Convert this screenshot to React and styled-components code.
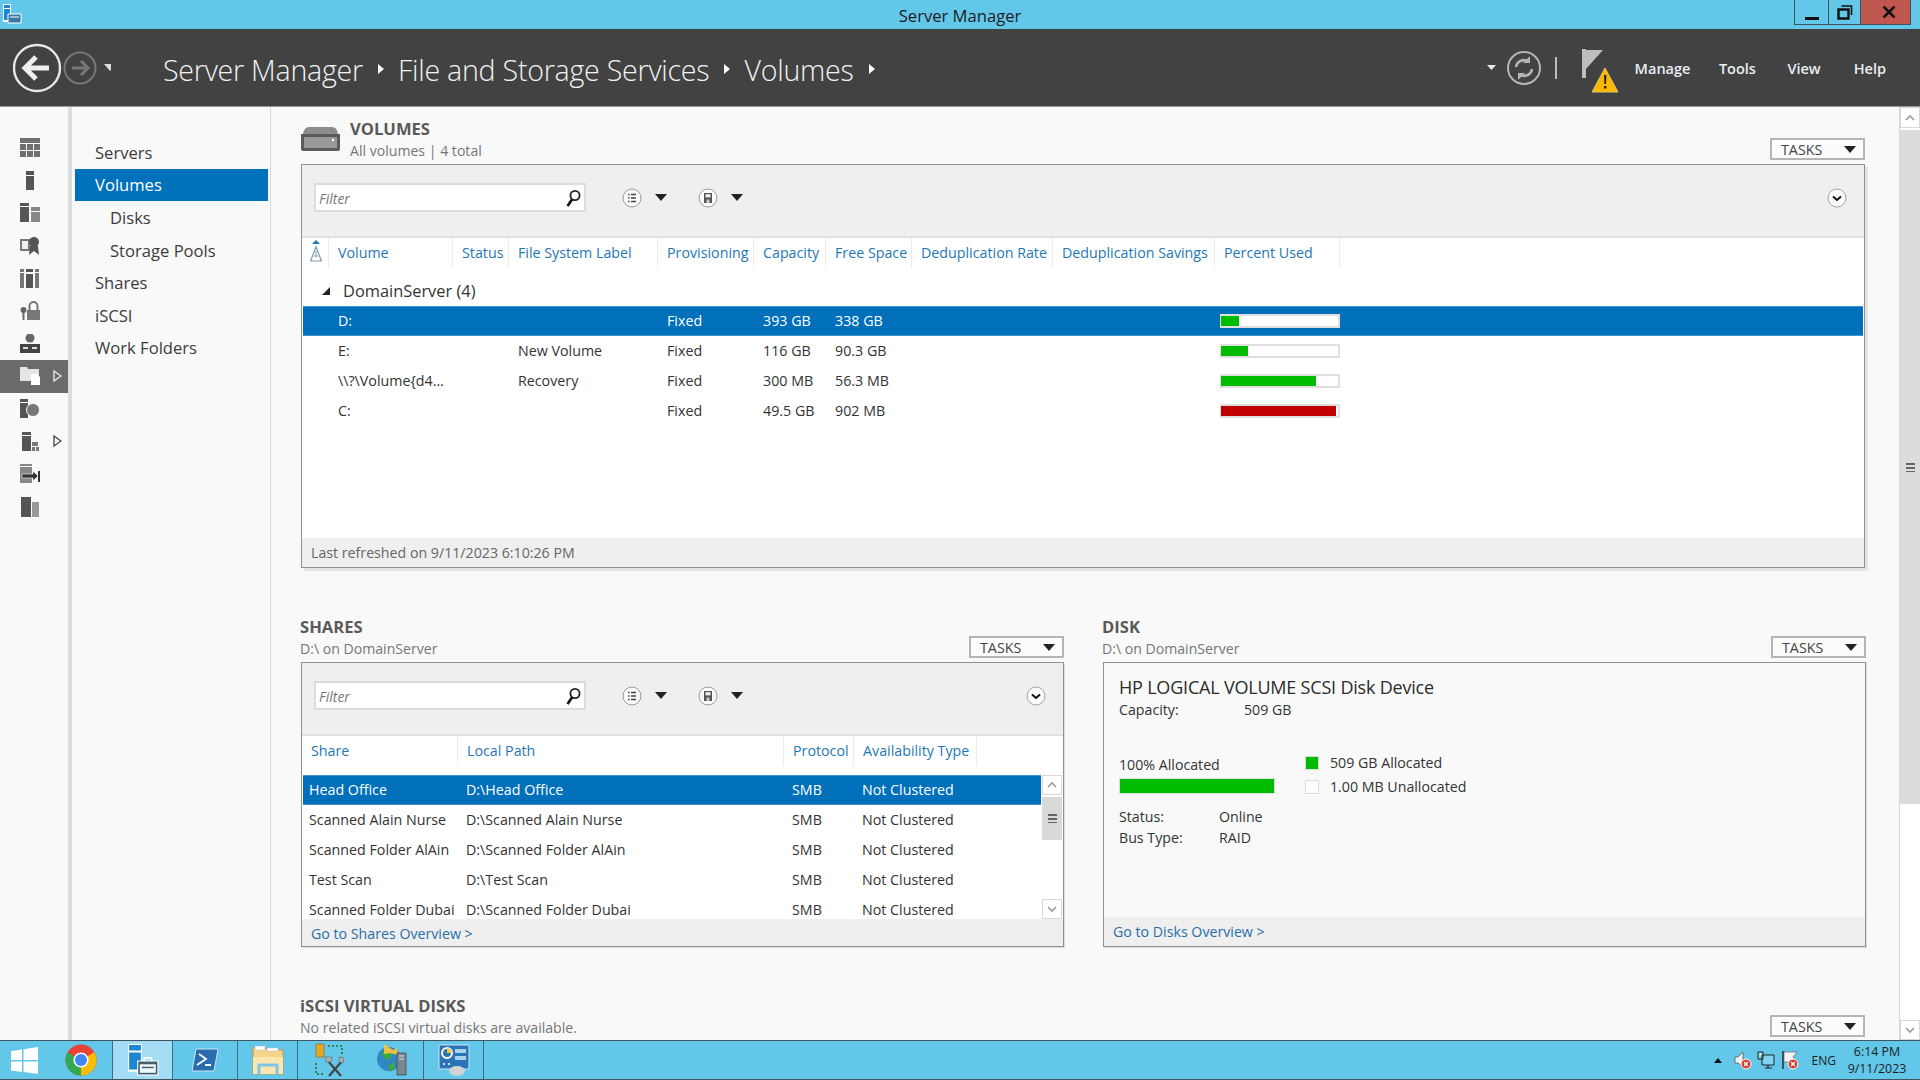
import React from "react";
import styled, { createGlobalStyle } from "styled-components";

const GlobalStyle = createGlobalStyle`
  html, body { margin: 0; padding: 0; height: 100%; background: #f9f9f9; }
  body { font-family: "Open Sans", "Noto Sans", sans-serif; overflow: hidden; }
  * { box-sizing: border-box; }
`;

const Window = styled.div`
  width: 1920px;
  height: 1080px;
  display: flex;
  flex-direction: column;
  overflow: hidden;
`;

const TitleBar = styled.div`
  height: 29px;
  flex: none;
  background: #63c7ea;
  display: grid;
  grid-template-columns: 1fr auto 1fr;
  align-items: start;
  color: #1c1c1c;
`;
const TitleIcon = styled.div`
  padding: 4px 0 0 2px;
  height: 25px;
`;
const TitleText = styled.div`
  font-size: 16.6px;
  line-height: 31px;
`;
const WindowButtons = styled.div`
  justify-self: end;
  display: flex;
  height: 25px;
  margin-right: 9px;
  border: 1px solid #3b5560;
  border-top: 0;
`;
const WindowButton = styled.div`
  width: ${(p) => p.$w}px;
  display: flex;
  align-items: center;
  justify-content: center;
  padding-left: ${(p) => (p.$close ? 7 : 0)}px;
  background: ${(p) => (p.$close ? "#c0574f" : "transparent")};
  & + & { border-left: 1px solid #3b5560; }
`;

const Header = styled.div`
  height: 78px;
  flex: none;
  background: #424242;
  border-bottom: 1px solid #9a9a9a;
  display: flex;
  align-items: center;
  color: #fff;
`;
const NavButtons = styled.div`
  display: flex;
  align-items: center;
  margin-left: 13px;
  width: 150px;
`;
const Crumbs = styled.div`
  display: flex;
  align-items: center;
  padding-top: 3px;
  font-size: 28.6px;
  font-weight: 300;
  color: #f2f2f2;
  letter-spacing: -0.25px;
`;
const CrumbArrow = styled.span`
  width: 0;
  height: 0;
  margin: 0 14px 0 15px;
  border-left: 6px solid #fff;
  border-top: 5px solid transparent;
  border-bottom: 5px solid transparent;
`;
const HeaderRight = styled.div`
  margin-left: auto;
  display: flex;
  align-items: center;
  padding-right: 34px;
  height: 100%;
`;
const Divider = styled.div`
  width: 2px;
  height: 22px;
  background: #bdbdbd;
  margin: 0 25px 0 10px;
`;
const FlagWrap = styled.div`
  display: flex;
  margin-top: 9px;
`;
const MenuItem = styled.div`
  font-size: 14.5px;
  font-weight: 600;
  color: #e8eef4;
  padding-top: 2px;
  margin-left: ${(p) => p.$ml}px;
`;

const Body = styled.div`
  flex: 1;
  min-height: 0;
  display: flex;
`;
const Rail = styled.div`
  width: 72px;
  flex: none;
  padding-top: 25px;
  background: #f9f9f9;
  border-right: 4px solid #dcdcdc;
`;
const RailItem = styled.div`
  height: 32.6px;
  position: relative;
  display: flex;
  align-items: center;
  padding-left: 20px;
  background: ${(p) => (p.$active ? "#6b6b6b" : "transparent")};
`;
const RailArrow = styled.svg`
  position: absolute;
  left: 53px;
  top: 10px;
`;
const SideNav = styled.div`
  width: 199px;
  flex: none;
  padding: 29px 2px 0 3px;
  background: #f9f9f9;
  border-right: 1px solid #d8d8d8;
`;
const NavItem = styled.div`
  height: 32.6px;
  display: flex;
  align-items: center;
  font-size: 16.6px;
  padding-left: ${(p) => (p.$sub ? 35 : 20)}px;
  color: ${(p) => (p.$active ? "#fff" : "#3c3c3c")};
  background: ${(p) => (p.$active ? "#0072bc" : "transparent")};
`;

const Content = styled.div`
  flex: 1;
  min-width: 0;
  padding: 11px 34px 0 30px;
  overflow: hidden;
  background: #f9f9f9;
`;
const SectionHead = styled.div`
  height: 42px;
  margin-bottom: 4px;
  display: flex;
  justify-content: space-between;
  align-items: flex-end;
`;
const HeadLeft = styled.div`
  display: flex;
  align-items: center;
  gap: 9px;
  align-self: stretch;
  margin-left: -1px;
`;
const HeadText = styled.div`
  margin: 0 0 -2px -1px;
`;
const VolumesText = styled.div`
  margin-top: 1px;
`;
const HeadTitle = styled.div`
  font-size: 16.6px;
  font-weight: 700;
  line-height: 22px;
  color: #5a5a5a;
`;
const HeadSub = styled.div`
  font-size: 14.1px;
  line-height: 22px;
  color: #767676;
`;
const TasksButton = styled.div`
  width: 95px;
  height: 22px;
  border: 2px solid #b5b5b5;
  background: #fcfcfc;
  display: flex;
  align-items: center;
  justify-content: space-between;
  padding: 0 7px 0 9px;
  font-size: 14.3px;
  color: #444;
`;
const ArrowDown = styled.span`
  width: 0;
  height: 0;
  flex: none;
  border-top: 7px solid #222;
  border-left: 6px solid transparent;
  border-right: 6px solid transparent;
`;
const Panel = styled.div`
  height: ${(p) => p.$h}px;
  margin-bottom: 48px;
  background: ${(p) => p.$bg || "#fff"};
  border: 1px solid #909090;
  box-shadow: ${(p) => (p.$shadow ? "3px 3px 0 #e4e4e4" : "1px 1px 0 #ddd")};
  display: flex;
  flex-direction: column;
  overflow: hidden;
`;
const Toolbar = styled.div`
  height: 73px;
  flex: none;
  background: #efefef;
  border-bottom: 2px solid #e2e2e2;
  display: flex;
  align-items: flex-start;
  padding: 18px 17px 0 12px;
`;
const FilterBox = styled.div`
  width: 272px;
  height: 29px;
  background: #fff;
  border: 2px solid #dcdcdc;
  display: flex;
  align-items: center;
  justify-content: space-between;
  padding: 1px 3px 0 3px;
  font-size: 14px;
  font-style: italic;
  color: #777;
  margin-right: 36px;
`;
const ToolGroup = styled.div`
  display: flex;
  align-items: center;
  gap: 13px;
  margin-right: 31px;
  height: 29px;
`;
const Collapse = styled.div`
  margin-left: auto;
  height: 29px;
  display: flex;
  align-items: center;
`;
const Columns = styled.div`
  display: grid;
  grid-template-columns: ${(p) => p.$cols};
  height: ${(p) => p.$h}px;
  flex: none;
  background: #fff;
`;
const ColHead = styled.div`
  padding: 5px 0 0 9px;
  height: 30px;
  font-size: 14.25px;
  line-height: 20px;
  white-space: nowrap;
  color: #1f78b4;
  border-right: 1px solid #ececec;
`;
const SortCell = styled.div`
  height: 30px;
  padding: 2px 0 0 7px;
  border-right: 1px solid #ececec;
`;
const GroupRow = styled.div`
  height: 38px;
  flex: none;
  display: flex;
  align-items: center;
  gap: 13px;
  padding: 7px 0 0 20px;
  font-size: 16.4px;
  color: #333;
`;
const GroupArrow = styled.span`
  width: 0;
  height: 0;
  border-bottom: 8px solid #222;
  border-left: 8px solid transparent;
`;
const DataRow = styled.div`
  display: grid;
  grid-template-columns: ${(p) => p.$cols};
  height: 30px;
  flex: none;
  margin: 0 1px;
  padding-bottom: 1px;
  align-items: center;
  font-size: 14.25px;
  white-space: nowrap;
  color: ${(p) => (p.$selected ? "#fff" : "#333")};
  background: ${(p) => (p.$selected ? "#0070bb" : "transparent")};
  box-shadow: ${(p) => (p.$selected ? "inset 0 1px 0 #3d96d0, inset 0 -1px 0 #3d96d0" : "none")};
`;
const Cell = styled.div`
  padding-left: ${(p) => p.$pl ?? 8}px;
  overflow: hidden;
`;
const Meter = styled.div`
  width: 120px;
  height: 14px;
  margin-left: 4px;
  background: #fff;
  border: 2px solid #dfdfdf;
  border-left-width: 1px;
`;
const MeterFill = styled.div`
  height: 100%;
  background: ${(p) => p.$color};
`;
const Spacer = styled.div`
  flex: 1;
  background: #fff;
`;
const PanelFooter = styled.div`
  height: 29px;
  flex: none;
  background: #efefef;
  display: flex;
  align-items: center;
  padding-left: ${(p) => p.$pl || 9}px;
  font-size: 14.2px;
  color: ${(p) => p.$color || "#2a6ea8"};
`;
const TwoCols = styled.div`
  display: grid;
  grid-template-columns: 763px 763px;
  column-gap: 39px;
`;
const RowsWrap = styled.div`
  height: 144px;
  flex: none;
  display: flex;
  background: #fff;
`;
const RowsClip = styled.div`
  flex: 1;
  min-width: 0;
  overflow: hidden;
`;
const MiniScroll = styled.div`
  width: 21px;
  flex: none;
  display: flex;
  flex-direction: column;
  align-items: stretch;
  padding-right: 1px;
`;
const ScrollBtn = styled.div`
  height: ${(p) => p.$h}px;
  flex: none;
  background: #fff;
  border: 1px solid #d8d8d8;
  display: flex;
  align-items: center;
  justify-content: center;
`;
const MiniThumb = styled.div`
  height: 43px;
  margin-top: 2px;
  background: #d9d9d9;
  display: flex;
  align-items: center;
  justify-content: center;
  flex: none;
`;
const ScrollGap = styled.div`
  flex: 1;
`;
const Grip = styled.div`
  width: 9px;
  height: 9px;
  background: repeating-linear-gradient(#666 0 2px, transparent 2px 4px);
`;
const DiskBody = styled.div`
  flex: 1;
  padding: 13px 15px 0;
  font-size: 14.2px;
  color: #333;
`;
const DiskTitle = styled.div`
  font-size: 18px;
  line-height: 22px;
  color: #2b2b2b;
  letter-spacing: -0.2px;
`;
const InfoRow = styled.div`
  display: grid;
  grid-template-columns: ${(p) => p.$label}px 1fr;
  line-height: 21.5px;
`;
const DiskCapacity = styled(InfoRow)`
  margin-top: 1px;
`;
const Allocation = styled.div`
  display: flex;
  gap: 30px;
  margin: 33px 0 9px;
`;
const AllocLeft = styled.div`
  width: 156px;
  line-height: 20px;
  padding-top: 1px;
`;
const AllocBar = styled.div`
  height: 16px;
  margin-top: 3px;
  background: #00bb00;
  border: 1px solid #dcdcdc;
`;
const Legend = styled.div`
  display: flex;
  flex-direction: column;
  gap: 4px;
  margin-top: -1px;
`;
const LegendRow = styled.div`
  display: flex;
  align-items: center;
  gap: 11px;
  line-height: 20px;
`;
const Swatch = styled.span`
  width: 14px;
  height: 14px;
  background: ${(p) => p.$color};
  border: 1px solid #dcdcdc;
`;
const PageScroll = styled.div`
  width: 21px;
  flex: none;
  display: flex;
  flex-direction: column;
  background: #fff;
  border-left: 1px solid #d8d8d8;
`;
const PageThumb = styled.div`
  height: 674px;
  flex: none;
  margin-top: 2px;
  background: #dcdcdc;
  display: flex;
  align-items: center;
  justify-content: center;
`;

const Taskbar = styled.div`
  height: 40px;
  flex: none;
  background: #63c7ea;
  border-top: 1px solid #3f5560;
  border-bottom: 1px solid #3f5560;
  display: flex;
  align-items: stretch;
`;
const TaskItem = styled.div`
  width: ${(p) => p.$w}px;
  display: flex;
  align-items: center;
  justify-content: center;
  padding-right: ${(p) => p.$pr || 0}px;
  background: ${(p) => (p.$active ? "#a3dcf3" : "transparent")};
  border-right: ${(p) => (p.$edge ? "1px solid #3c6d80" : "0")};
`;
const Tray = styled.div`
  margin-left: auto;
  display: flex;
  align-items: center;
  color: #1c1c1c;
`;
const TrayUp = styled.span`
  width: 0;
  height: 0;
  margin-right: 12px;
  border-bottom: 5px solid #111;
  border-left: 4px solid transparent;
  border-right: 4px solid transparent;
`;
const TrayIcon = styled.span`
  display: flex;
  margin-right: ${(p) => p.$mr}px;
`;
const TrayLang = styled.div`
  font-size: 12px;
  margin: 0 5px 0 12px;
`;
const Clock = styled.div`
  font-size: 12.4px;
  line-height: 17px;
  text-align: center;
  width: 72px;
  margin-right: 7px;
`;

const volumeCols = "27px 124px 56px 149px 96px 72px 86px 141px 162px 125px 1fr";
const shareCols = "156px 326px 70px 123px 1fr";

const volumeRows = [
  { name: "D:", label: "", prov: "Fixed", cap: "393 GB", free: "338 GB", pct: 15, color: "#00bb00", selected: true },
  { name: "E:", label: "New Volume", prov: "Fixed", cap: "116 GB", free: "90.3 GB", pct: 23, color: "#00bb00" },
  { name: "\\\\?\\Volume{d4...", label: "Recovery", prov: "Fixed", cap: "300 MB", free: "56.3 MB", pct: 81, color: "#00bb00" },
  { name: "C:", label: "", prov: "Fixed", cap: "49.5 GB", free: "902 MB", pct: 98, color: "#c00000" },
];

const shareRows = [
  ["Head Office", "D:\\Head Office"],
  ["Scanned Alain Nurse", "D:\\Scanned Alain Nurse"],
  ["Scanned Folder AlAin", "D:\\Scanned Folder AlAin"],
  ["Test Scan", "D:\\Test Scan"],
  ["Scanned Folder Dubai", "D:\\Scanned Folder Dubai"],
];

const ListCircle = () => (
  <svg width="20" height="20" viewBox="0 0 20 20">
    <circle cx="10" cy="10" r="9" fill="#fafafa" stroke="#9a9a9a" />
    <path d="M6 6.5h1.5M6 10h1.5M6 13.5h1.5M9 6.5h5M9 10h5M9 13.5h5" stroke="#444" strokeWidth="1.6" />
  </svg>
);
const SaveCircle = () => (
  <svg width="20" height="20" viewBox="0 0 20 20">
    <circle cx="10" cy="10" r="9" fill="#fafafa" stroke="#9a9a9a" />
    <path d="M6 5h8v10H6z" fill="#555" />
    <path d="M7.5 6.2h5v3.2h-5z" fill="#f2f2f2" />
    <path d="M8.5 11.5h3V15h-3z" fill="#c8c8c8" />
  </svg>
);
const ChevronCircle = () => (
  <svg width="20" height="20" viewBox="0 0 20 20">
    <circle cx="10" cy="10" r="9" fill="#fafafa" stroke="#a5a5a5" />
    <path d="M6 8.5l4 3.5 4-3.5" fill="none" stroke="#111" strokeWidth="2" />
  </svg>
);
const SearchIcon = () => (
  <svg width="16" height="19" viewBox="0 0 16 19">
    <circle cx="10" cy="6.5" r="4.6" fill="none" stroke="#222" strokeWidth="1.8" />
    <path d="M7 10.5l-4.5 6.5" stroke="#111" strokeWidth="2.6" />
  </svg>
);
const SmallChevron = ({ up, color = "#999" }) => (
  <svg width="12" height="8" viewBox="0 0 12 8">
    <path d={up ? "M2 6l4-4 4 4" : "M2 2l4 4 4-4"} fill="none" stroke={color} strokeWidth="1.6" />
  </svg>
);

const railShapes = [
  <path key="a" d="M0 0h20v5H0zM0 6h6v6H0zM7 6h6v6H7zM14 6h6v6h-6zM0 13h6v6H0zM7 13h6v6H7zM14 13h6v6h-6z" fill="#6f6f6f" />,
  <path key="b" d="M6 0h8v4H6z M6 5h8v14H6z" fill="#555" />,
  <g key="c"><path d="M0 0h9v3H0zM0 4h9v15H0z" fill="#555" /><path d="M11 4h9v4h-9zM11 9h9v10h-9z" fill="#888" /></g>,
  <g key="d"><path d="M0 3h10v12H0z" fill="#777" /><path d="M2 5h6v8H2z" fill="#eee" /><circle cx="14" cy="6" r="5" fill="#555" /><path d="M10 10l-1 9 5-4 5 4-1-9z" fill="#555" /></g>,
  <g key="e"><path d="M0 0h4v3H0zM0 4h4v15H0zM15 0h4v3h-4zM15 4h4v15h-4z" fill="#777" /><path d="M6 0h7v3H6zM6 5h7v14H6z" fill="#555" /></g>,
  <g key="f"><circle cx="3.5" cy="9" r="3" fill="#666" /><path d="M2.5 11h2v8h-2z" fill="#666" /><path d="M7 9h13v10H7z" fill="#777" /><path d="M9.5 9V5a4 4 0 018 0v4" fill="none" stroke="#777" strokeWidth="2" /></g>,
  <g key="g"><circle cx="10" cy="4" r="4.5" fill="#666" /><path d="M0 10h20v9H0z" fill="#444" /><path d="M3 13h5v2H3zM12 13h5v2h-5z" fill="#ddd" /></g>,
  <g key="h"><path d="M0 1h7l1 2h11v12H0z" fill="#e6e6e6" /><path d="M11 8h6l3 3v8h-9z" fill="#fff" /></g>,
  <g key="i"><path d="M0 0h8v3H0zM0 4h8v15H0z" fill="#555" /><circle cx="13" cy="11" r="6.5" fill="#777" stroke="#f9f9f9" /></g>,
  <g key="j"><path d="M2 0h9v3H2zM2 4h9v15H2z" fill="#555" /><path d="M12 10h6v4h-6zM12 15h3v4h-3zM16 15h3v4h-3z" fill="#777" /></g>,
  <g key="k"><path d="M0 0h12v2H0zM0 3h12v16H0z" fill="#888" /><path d="M2 10h11V7l5 5-5 5v-3H2z" fill="#333" stroke="#f9f9f9" strokeWidth=".6" /><path d="M18 7h2v11h-2z" fill="#333" /></g>,
  <g key="l"><path d="M1 0h10v20H1z" fill="#555" /><path d="M12 5h7v15h-7z" fill="#999" /></g>,
];

const railItems = railShapes.map((shape, i) => ({
  shape,
  active: i === 7,
  arrow: i === 7 || i === 9,
}));

const navItems = [
  { name: "Servers" },
  { name: "Volumes", active: true },
  { name: "Disks", sub: true },
  { name: "Storage Pools", sub: true },
  { name: "Shares" },
  { name: "iSCSI" },
  { name: "Work Folders" },
];

const ServerManagerGlyph = ({ size, w }) => (
  <svg width={size} height={size} viewBox="0 0 30 30">
    <path d="M1 0h13v26H1z" fill="#fff" />
    <path d="M2 1h11v5H2zM2 8h11v16H2z" fill="#1b87d4" />
    <path d="M10 16h19v13H10z" fill="#46606e" stroke="#fff" />
    <path d="M12 19h15v8H12z" fill="#eef6fb" />
    <path d="M14 22h11" stroke="#46606e" strokeWidth={w} />
    <path d="M16 16v-3h7v3" fill="none" stroke="#fff" strokeWidth="1.5" />
  </svg>
);

const SpeakerIcon = () => (
  <svg width="18" height="20" viewBox="0 0 18 20">
    <path d="M1 7h3l5-5v15l-5-4H1z" fill="#f2f2f2" stroke="#555" strokeWidth=".8" />
    <circle cx="12" cy="14" r="5" fill="#d93a2b" stroke="#fff" />
    <path d="M10 12l4 4M14 12l-4 4" stroke="#fff" strokeWidth="1.4" />
  </svg>
);
const NetworkIcon = () => (
  <svg width="18" height="20" viewBox="0 0 18 20">
    <path d="M1 2h5v7H1zM5 5h12v10H5z" fill="#7fd4f0" stroke="#222" />
    <path d="M8 18h7M11 15v3" stroke="#222" strokeWidth="1.2" />
    <circle cx="3.5" cy="4.5" r="1" fill="#fff" />
  </svg>
);
const TrayFlagIcon = () => (
  <svg width="18" height="20" viewBox="0 0 18 20">
    <path d="M1 1v18" stroke="#222" strokeWidth="1.4" />
    <path d="M2 2h13l-4 5 4 5H2z" fill="#f4f4f4" stroke="#555" strokeWidth=".6" />
    <circle cx="11" cy="14" r="5" fill="#d93a2b" stroke="#fff" />
    <path d="M9 12l4 4M13 12l-4 4" stroke="#fff" strokeWidth="1.4" />
  </svg>
);

const Tasks = () => (
  <TasksButton>
    TASKS
    <ArrowDown />
  </TasksButton>
);

const PanelToolbar = () => (
  <Toolbar>
    <FilterBox>
      Filter
      <SearchIcon />
    </FilterBox>
    <ToolGroup>
      <ListCircle />
      <ArrowDown />
    </ToolGroup>
    <ToolGroup>
      <SaveCircle />
      <ArrowDown />
    </ToolGroup>
    <Collapse>
      <ChevronCircle />
    </Collapse>
  </Toolbar>
);

export default function App() {
  return (
    <Window>
      <GlobalStyle />
      <TitleBar>
        <TitleIcon>
          <svg width="20" height="20" viewBox="0 0 20 20">
            <path d="M1 0h8v18H1z" fill="#fff" />
            <path d="M2 1h6v3H2zM2 5h6v11H2z" fill="#1b87d4" />
            <path d="M6 10h13v9H6z" fill="#3a78a8" stroke="#fff" />
            <path d="M8 13h9" stroke="#fff" />
          </svg>
        </TitleIcon>
        <TitleText>Server Manager</TitleText>
        <WindowButtons>
          <WindowButton $w={33}>
            <svg width="16" height="16" viewBox="0 0 16 16">
              <path d="M1 13h14v3H1z" fill="#111" />
            </svg>
          </WindowButton>
          <WindowButton $w={32}>
            <svg width="16" height="16" viewBox="0 0 16 16">
              <path d="M1.5 5.5h10v9h-10z" fill="none" stroke="#111" strokeWidth="2.4" />
              <path d="M4.5 2h10v9" fill="none" stroke="#111" strokeWidth="1.6" />
            </svg>
          </WindowButton>
          <WindowButton $w={50} $close>
            <svg width="14" height="12" viewBox="0 0 14 12">
              <path d="M1.5 0.5l11 11M12.5 0.5l-11 11" stroke="#111" strokeWidth="2.6" />
            </svg>
          </WindowButton>
        </WindowButtons>
      </TitleBar>

      <Header>
        <NavButtons>
          <svg width="98" height="50" viewBox="0 0 98 50">
            <circle cx="24" cy="25" r="23" fill="none" stroke="#e8e8e8" strokeWidth="2.4" />
            <path d="M36 25H13M23 14L12 25l11 11" fill="none" stroke="#efefef" strokeWidth="5" />
            <circle cx="67" cy="25" r="15.5" fill="none" stroke="#777" strokeWidth="2" />
            <path d="M59 25h15M68 18l7 7-7 7" fill="none" stroke="#777" strokeWidth="3" />
            <path d="M91 21h12l-6 7z" fill="#ddd" />
          </svg>
        </NavButtons>
        <Crumbs>
          Server Manager
          <CrumbArrow />
          File and Storage Services
          <CrumbArrow />
          Volumes
          <CrumbArrow />
        </Crumbs>
        <HeaderRight>
          <svg width="58" height="36" viewBox="2 0 58 36">
            <path d="M2 15h9l-4.5 5z" fill="#e8e8e8" />
            <circle cx="39" cy="18" r="16" fill="none" stroke="#b5b5b5" strokeWidth="2" />
            <path d="M31 17a8 8 0 0113-5M47 19a8 8 0 01-13 5" fill="none" stroke="#b5b5b5" strokeWidth="2.6" />
            <path d="M45 6v7h-7zM33 30v-7h7z" fill="#b5b5b5" />
          </svg>
          <Divider />
          <FlagWrap>
            <svg width="38" height="46" viewBox="0 0 38 46">
              <path d="M0 0h4v29H0z" fill="#bdbdbd" />
              <path d="M4 1h17L4 20z" fill="#bdbdbd" />
              <path d="M23 19l13 24H10z" fill="#fdb900" stroke="#e5c46a" strokeWidth="1" />
              <path d="M22 26h2.4l-.4 9h-1.6zM22 37h2.4v2.4H22z" fill="#222" />
            </svg>
          </FlagWrap>
          <MenuItem $ml={15}>Manage</MenuItem>
          <MenuItem $ml={28.5}>Tools</MenuItem>
          <MenuItem $ml={31.5}>View</MenuItem>
          <MenuItem $ml={33}>Help</MenuItem>
        </HeaderRight>
      </Header>

      <Body>
        <Rail>
          {railItems.map((item, i) => (
            <RailItem key={i} $active={item.active}>
              <svg width="20" height="20" viewBox="0 0 20 20">
                {item.shape}
              </svg>
              {item.arrow && (
                <RailArrow width="9" height="12" viewBox="0 0 9 12">
                  <path d="M1 1l7 5-7 5z" fill="none" stroke={item.active ? "#eee" : "#444"} strokeWidth="1.3" />
                </RailArrow>
              )}
            </RailItem>
          ))}
        </Rail>
        <SideNav>
          {navItems.map((item) => (
            <NavItem key={item.name} $active={item.active} $sub={item.sub}>
              {item.name}
            </NavItem>
          ))}
        </SideNav>

        <Content>
          <SectionHead>
            <HeadLeft>
              <svg width="41" height="26" viewBox="0 0 41 26">
                <path d="M3 8Q4 1 9 1h23q5 0 6 7z" fill="#8d8d8d" />
                <path d="M1 8h39v15q0 2-2 2H3q-2 0-2-2z" fill="#5b5b5b" />
                <path d="M4 11h33v11H4z" fill="#999" />
                <circle cx="33" cy="14" r="1.2" fill="#fff" />
              </svg>
              <VolumesText>
                <HeadTitle>VOLUMES</HeadTitle>
                <HeadSub>All volumes | 4 total</HeadSub>
              </VolumesText>
            </HeadLeft>
            <Tasks />
          </SectionHead>
          <Panel $h={404} $shadow>
            <PanelToolbar />
            <Columns $cols={volumeCols} $h={30}>
              <SortCell>
                <svg width="14" height="24" viewBox="0 0 14 24">
                  <path d="M3 4l4-4 4 4z" fill="#1f78b4" />
                  <path d="M7 7l5.5 14h-11z" fill="none" stroke="#7d9cb4" strokeWidth="1.2" />
                  <path d="M7 11v6M5 16h4" stroke="#7d9cb4" />
                </svg>
              </SortCell>
              {["Volume", "Status", "File System Label", "Provisioning", "Capacity", "Free Space", "Deduplication Rate", "Deduplication Savings", "Percent Used"].map(
                (c) => (
                  <ColHead key={c}>{c}</ColHead>
                )
              )}
            </Columns>
            <GroupRow>
              <GroupArrow />
              DomainServer (4)
            </GroupRow>
            {volumeRows.map((r) => (
              <DataRow key={r.name} $cols={volumeCols} $selected={r.selected}>
                <Cell />
                <Cell>{r.name}</Cell>
                <Cell />
                <Cell>{r.label}</Cell>
                <Cell>{r.prov}</Cell>
                <Cell>{r.cap}</Cell>
                <Cell>{r.free}</Cell>
                <Cell />
                <Cell />
                <Cell $pl={0}>
                  <Meter>
                    <MeterFill $color={r.color} style={{ width: `${r.pct}%` }} />
                  </Meter>
                </Cell>
              </DataRow>
            ))}
            <Spacer />
            <PanelFooter $color="#666">Last refreshed on 9/11/2023 6:10:26 PM</PanelFooter>
          </Panel>

          <TwoCols>
            <div>
              <SectionHead>
                <HeadText>
                  <HeadTitle>SHARES</HeadTitle>
                  <HeadSub>D:\ on DomainServer</HeadSub>
                </HeadText>
                <Tasks />
              </SectionHead>
              <Panel $h={285} $bg="#f9f9f9">
                <PanelToolbar />
                <Columns $cols={shareCols} $h={39}>
                  {["Share", "Local Path", "Protocol", "Availability Type"].map((c) => (
                    <ColHead key={c}>{c}</ColHead>
                  ))}
                </Columns>
                <RowsWrap>
                  <RowsClip>
                    {shareRows.map(([name, path], i) => (
                      <DataRow key={name} $cols={shareCols} $selected={i === 0}>
                        <Cell $pl={6}>{name}</Cell>
                        <Cell $pl={7}>{path}</Cell>
                        <Cell $pl={7}>SMB</Cell>
                        <Cell $pl={7}>Not Clustered</Cell>
                      </DataRow>
                    ))}
                  </RowsClip>
                  <MiniScroll>
                    <ScrollBtn $h={20}>
                      <SmallChevron up />
                    </ScrollBtn>
                    <MiniThumb>
                      <Grip />
                    </MiniThumb>
                    <ScrollGap />
                    <ScrollBtn $h={20}>
                      <SmallChevron />
                    </ScrollBtn>
                  </MiniScroll>
                </RowsWrap>
                <PanelFooter>Go to Shares Overview &gt;</PanelFooter>
              </Panel>
            </div>
            <div>
              <SectionHead>
                <HeadText>
                  <HeadTitle>DISK</HeadTitle>
                  <HeadSub>D:\ on DomainServer</HeadSub>
                </HeadText>
                <Tasks />
              </SectionHead>
              <Panel $h={285} $bg="#f9f9f9">
                <DiskBody>
                  <DiskTitle>HP LOGICAL VOLUME SCSI Disk Device</DiskTitle>
                  <DiskCapacity $label={125}>
                    <span>Capacity:</span>
                    <span>509 GB</span>
                  </DiskCapacity>
                  <Allocation>
                    <AllocLeft>
                      100% Allocated
                      <AllocBar />
                    </AllocLeft>
                    <Legend>
                      <LegendRow>
                        <Swatch $color="#00bb00" />
                        509 GB Allocated
                      </LegendRow>
                      <LegendRow>
                        <Swatch $color="#fff" />
                        1.00 MB Unallocated
                      </LegendRow>
                    </Legend>
                  </Allocation>
                  <InfoRow $label={100}>
                    <span>Status:</span>
                    <span>Online</span>
                  </InfoRow>
                  <InfoRow $label={100}>
                    <span>Bus Type:</span>
                    <span>RAID</span>
                  </InfoRow>
                </DiskBody>
                <PanelFooter>Go to Disks Overview &gt;</PanelFooter>
              </Panel>
            </div>
          </TwoCols>

          <SectionHead>
            <HeadText>
              <HeadTitle>iSCSI VIRTUAL DISKS</HeadTitle>
              <HeadSub>No related iSCSI virtual disks are available.</HeadSub>
            </HeadText>
            <Tasks />
          </SectionHead>
        </Content>

        <PageScroll>
          <ScrollBtn $h={21}>
            <SmallChevron up />
          </ScrollBtn>
          <PageThumb>
            <Grip />
          </PageThumb>
          <ScrollGap />
          <ScrollBtn $h={20}>
            <SmallChevron />
          </ScrollBtn>
        </PageScroll>
      </Body>

      <Taskbar>
        <TaskItem $w={54} $pr={5}>
          <svg width="27" height="27" viewBox="0 0 27 27">
            <path d="M0 4l11-1.6V13H0zM12.5 2.2L27 0v13H12.5zM0 14.5h11v10.6L0 23.5zM12.5 14.5H27V27l-14.5-2z" fill="#fff" />
          </svg>
        </TaskItem>
        <TaskItem $w={59} $pr={5} $edge>
          <svg width="32" height="32" viewBox="0 0 32 32">
            <circle cx="16" cy="16" r="15.5" fill="#ea4335" />
            <path d="M16 16L2.6 8.2A15.5 15.5 0 0016 31.5z" fill="#34a853" />
            <path d="M16 16l13.4-7.8A15.5 15.5 0 0116 31.5z" fill="#fbbc05" />
            <circle cx="16" cy="16" r="7.6" fill="#fff" />
            <circle cx="16" cy="16" r="6" fill="#4285f4" />
          </svg>
        </TaskItem>
        <TaskItem $w={60} $active $edge>
          <ServerManagerGlyph size={32} w={1.4} />
        </TaskItem>
        <TaskItem $w={65} $edge>
          <svg width="28" height="24" viewBox="0 0 28 24">
            <path d="M5 1h22l-4 22H1z" fill="#2a6cb0" stroke="#cfe3f3" />
            <path d="M8 6l7 5-9 6M14 17h6" fill="none" stroke="#fff" strokeWidth="1.8" />
          </svg>
        </TaskItem>
        <TaskItem $w={60} $edge>
          <svg width="32" height="32" viewBox="0 0 32 32">
            <path d="M1 4h12l2 2h16v24H1z" fill="#f4d58a" stroke="#bf9a4c" />
            <path d="M3 2h10v4H3zM15 4h11v3H15z" fill="#fff" stroke="#bbb" strokeWidth=".5" />
            <path d="M1 13h30v17H1z" fill="#fbe6ad" />
            <path d="M7 30v-9h18v9" fill="none" stroke="#7fc3e8" strokeWidth="3" />
          </svg>
        </TaskItem>
        <TaskItem $w={63}>
          <svg width="32" height="34" viewBox="0 0 32 34">
            <path d="M2 1h8v13H2z" fill="#e0a72a" stroke="#8a6a14" strokeWidth=".6" />
            <path d="M14 3h14v10M2 20v11h9" fill="none" stroke="#2d6b2a" strokeWidth="1.6" strokeDasharray="2 2" />
            <path d="M14 18l13 15M28 18L15 33" stroke="#444" strokeWidth="2.2" />
            <path d="M11 14h7l-1 5h-5zM25 14l5 1-1 5-4-1z" fill="#a8aeb2" stroke="#555" strokeWidth=".5" />
          </svg>
        </TaskItem>
        <TaskItem $w={63} $edge>
          <svg width="32" height="34" viewBox="0 0 32 34">
            <circle cx="13" cy="16" r="12" fill="#2f86c9" />
            <path d="M5 10l7-5 5 7-6 6zM12 22l6-3 1 7-5 3z" fill="#3da64a" />
            <path d="M8 1l9 6 4-2 1 7-8-2-6 1z" fill="#f0c040" />
            <path d="M21 10h9v22h-9z" fill="#7a8790" stroke="#444" strokeWidth=".7" />
            <path d="M23 13h5M23 16h5" stroke="#ddd" />
          </svg>
        </TaskItem>
        <TaskItem $w={60} $edge>
          <svg width="32" height="34" viewBox="0 0 32 34">
            <path d="M1 2h30v24H1z" fill="#2a74b8" stroke="#cfe3f3" />
            <circle cx="9" cy="10" r="5" fill="none" stroke="#fff" strokeWidth="2" />
            <path d="M9 10V5a5 5 0 015 5z" fill="#f3c04a" />
            <path d="M17 6h11v4H17zM17 13h11v4H17z" fill="#a9d4f0" />
            <circle cx="6" cy="21" r="1" fill="#fff" />
            <circle cx="11" cy="21" r="1" fill="#fff" />
            <ellipse cx="19" cy="28" rx="8" ry="5" fill="#cfd3d6" />
          </svg>
        </TaskItem>
        <Tray>
          <TrayUp />
          <TrayIcon $mr={5}>
            <SpeakerIcon />
          </TrayIcon>
          <TrayIcon $mr={7}>
            <NetworkIcon />
          </TrayIcon>
          <TrayFlagIcon />
          <TrayLang>ENG</TrayLang>
          <Clock>
            6:14 PM
            <br />
            9/11/2023
          </Clock>
        </Tray>
      </Taskbar>
    </Window>
  );
}
